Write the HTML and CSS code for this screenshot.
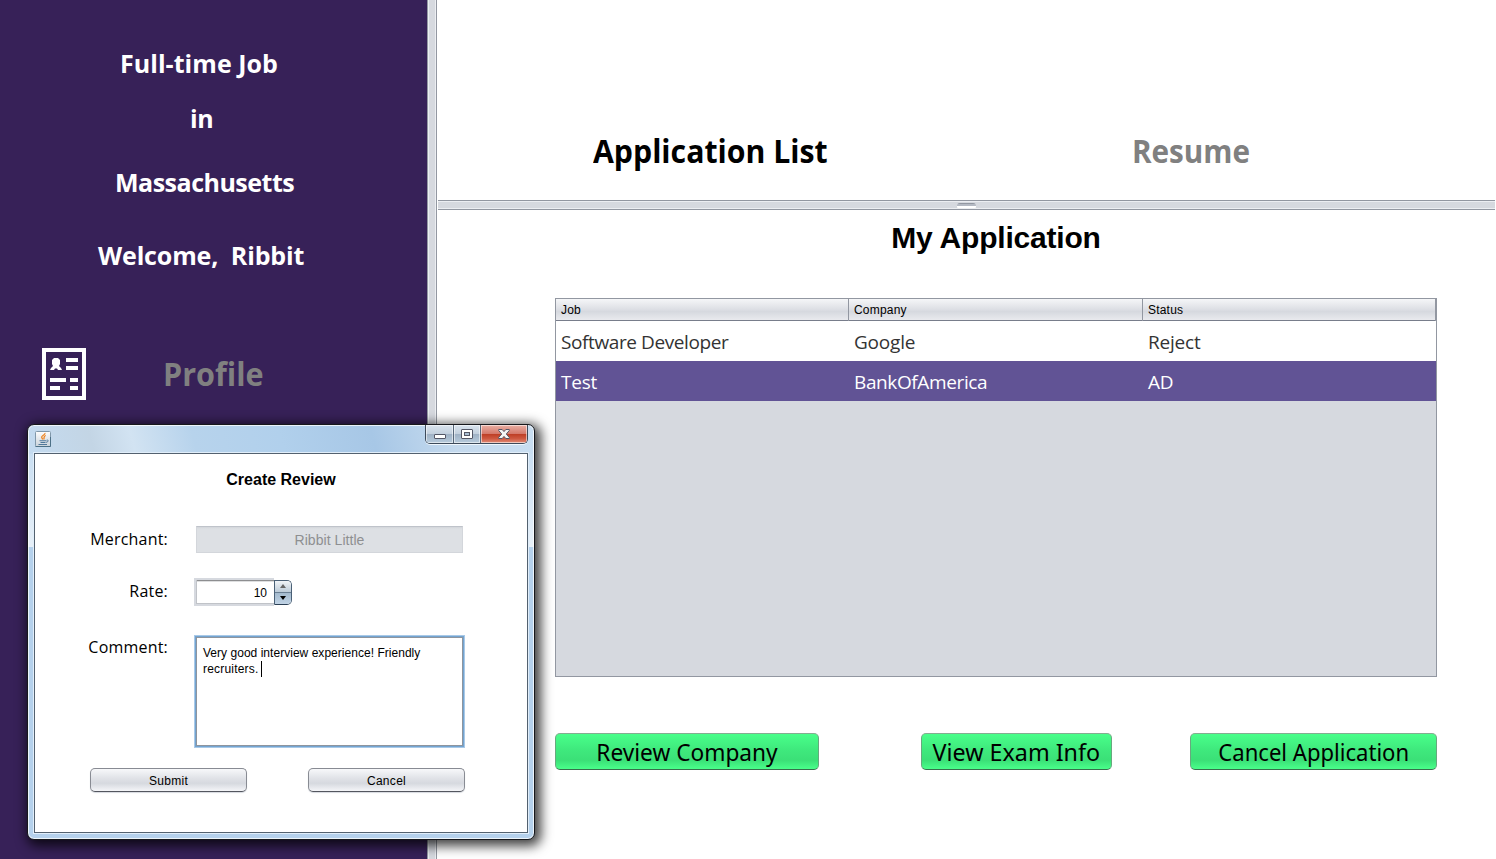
FILE: index.html
```html
<!DOCTYPE html>
<html lang="en">
<head>
<meta charset="utf-8">
<title>My Application</title>
<link rel="stylesheet" href="styles.css">
</head>
<body>
<div class="app">
  <aside class="sidebar">
    <div class="side-label type"><span>Full-time Job</span></div>
    <div class="side-label word-in"><span>in</span></div>
    <div class="side-label state"><span>Massachusetts</span></div>
    <div class="side-label welcome"><span>Welcome,&nbsp; Ribbit</span></div>
    <div class="profile">
      <svg class="profile-icon" width="44" height="52" viewBox="0 0 44 52" shape-rendering="crispEdges">
        <rect x="2" y="2" width="40" height="48" fill="none" stroke="#fff" stroke-width="4"/>
        <path fill="#fff" d="M24 10h12v4H24zM24 18h12v4H24zM8 30h16v4H8zM28 30h8v4h-8zM8 38h10v4H8zM28 38h8v4h-8z"/>
        <path fill="#fff" shape-rendering="auto" d="M12 10h4l2 2v4l-1 2 2 2 1 2h-4l-1-1.500h-2L12 22H8l1-2 2-2-1-2v-4z"/>
      </svg>
      <span class="profile-text">Profile</span>
    </div>
  </aside>
  <div class="divider-v"></div>
  <div class="content">
    <header class="tabs">
      <div class="tab tab-active"><span>Application List</span></div>
      <div class="tab tab-resume"><span>Resume</span></div>
    </header>
    <div class="divider-h"><i class="grip"></i></div>
    <main class="main">
      <h1 class="heading">My Application</h1>
      <div class="table">
        <div class="tr thead"><span>Job</span><span>Company</span><span>Status</span></div>
        <div class="tr"><span class="job">Software Developer</span><span>Google</span><span>Reject</span></div>
        <div class="tr selected"><span>Test</span><span class="bank">BankOfAmerica</span><span>AD</span></div>
      </div>
      <div class="actions">
        <button class="green review"><span>Review Company</span></button>
        <button class="green exam"><span>View Exam Info</span></button>
        <button class="green cancel-app"><span>Cancel Application</span></button>
      </div>
    </main>
  </div>
</div>

<section class="dialog">
  <div class="titlebar">
    <svg class="java" width="16" height="16" viewBox="0 0 16 16">
      <defs><linearGradient id="jg" x1="0" y1="0" x2="0" y2="1"><stop offset="0" stop-color="#fdfdfd"/><stop offset="1" stop-color="#c9d2da"/></linearGradient></defs>
      <rect x=".5" y=".5" width="15" height="15" rx="1" fill="url(#jg)" stroke="#8198aa"/>
      <path d="M.5 15.500h15V6" fill="none" stroke="#4d7187"/>
      <path d="M10 2C10.500 4 6 4.500 6.700 6.500c.3.800 1 1 .7 2M10.800 4.500C8 5.500 9.700 6.500 8.700 8.500" fill="none" stroke="#ee8420" stroke-width="1.300"/>
      <path d="M4.500 9.800h6.500M5.500 11.500h5M3.500 13.500h8.500" fill="none" stroke="#50789a" stroke-width="1.100"/>
      <path d="M11.500 9.300c2.600-.8 2.200 1.700-.5 2" fill="none" stroke="#50789a"/>
    </svg>
    <div class="controls">
      <span class="ctl min"><svg width="12" height="5" viewBox="0 0 12 5"><rect x=".5" y=".5" width="11" height="4" rx=".5" fill="#fff" stroke="#545766"/></svg></span>
      <span class="ctl max"><svg width="12" height="10" viewBox="0 0 12 10"><rect x=".5" y=".5" width="11" height="9" rx=".5" fill="#fff" stroke="#545766"/><rect x="3.500" y="3.500" width="5" height="3" fill="#a9bfd3" stroke="#545766"/></svg></span>
      <span class="ctl close"><svg width="12" height="10" viewBox="0 0 12 10"><path d="M.7.500h3.500L6 2.600 7.800.500h3.500v1L8.300 5l3 3.500v1H7.800L6 7.400 4.200 9.500H.7v-1L3.700 5l-3-3.500z" fill="#f5f5f5" stroke="#545766"/></svg></span>
    </div>
  </div>
  <div class="client">
    <h2 class="dialog-title">Create Review</h2>
    <div class="row row-merchant"><label>Merchant:</label><div class="merchant">Ribbit Little</div></div>
    <div class="row row-rate"><label>Rate:</label>
      <div class="spinner"><div class="spin-field">10</div>
        <div class="spin-buttons"><span><svg width="6" height="4" viewBox="0 0 6 4"><path d="M3 0l3 4H0z" fill="#666"/></svg></span><span><svg width="6" height="4" viewBox="0 0 6 4"><path d="M3 4l3-4H0z" fill="#000"/></svg></span></div>
      </div>
    </div>
    <div class="row row-comment"><label>Comment:</label><div class="comment"><span>Very good interview experience! Friendly</span><br><span class="line2">recruiters.</span><i class="caret"></i></div></div>
    <div class="buttons"><button class="grey">Submit</button><button class="grey">Cancel</button></div>
  </div>
</section>
</body>
</html>
```
FILE: styles.css
```css
* { box-sizing: border-box; }
body {
  margin: 0;
  background: #fff;
  color: #000;
  font-family: "Liberation Sans", sans-serif;
  overflow: hidden;
}
button { font-family: inherit; padding: 0; color: #000; }

.app { display: flex; width: 1496px; height: 859px; }

/* Sidebar */
.sidebar {
  width: 427px;
  padding-top: 43px;
  background: #372158;
  color: #fff;
  font: bold 25px/40px "Open Sans", sans-serif;
  white-space: nowrap;
}
.side-label { height: 40px; }
.type { padding-left: 120px; letter-spacing: .05px; }
.word-in { padding-left: 190px; margin-top: 15px; letter-spacing: -.5px; }
.state { padding-left: 115px; margin-top: 24px; letter-spacing: -.5px; }
.welcome { padding-left: 98px; margin-top: 33px; letter-spacing: -.15px; }
.profile { display: flex; align-items: center; padding-left: 42px; margin-top: 73px; height: 52px; }
.profile-text { margin-left: 77px; font-size: 32px; transform: scaleX(.955); transform-origin: left; color: #808080; }

/* Split pane dividers */
.divider-v {
  width: 10px;
  background: linear-gradient(to right, #9297a1 0 1px, #eceef2 1px 2px, #d6d9df 2px 8px, #eceef2 8px 9px, #9297a1 9px);
}
.divider-h {
  display: flex;
  justify-content: center;
  height: 10px;
  margin: 0 1px;
  padding-top: 3px;
  background: linear-gradient(#9297a1 0 1px, #eceef2 1px 2px, #d6d9df 2px 8px, #eceef2 8px 9px, #9297a1 9px);
}
.grip {
  width: 19px;
  height: 5px;
  border-radius: 3px 3px 1px 1px;
  background: linear-gradient(#9297a1 0 1px, #b4b9c3 1px 3px, #fff 3px);
}

/* Content */
.content { flex: 1; }
.tabs { display: flex; height: 200px; padding-top: 127px; font: bold 32px/48px "Open Sans", sans-serif; white-space: nowrap; }
.tab span { display: inline-block; transform-origin: left; }
.tab-active { width: 539px; padding-left: 156px; }
.tab-active span { transform: scaleX(.945); }
.tab-resume { padding-left: 156px; color: #808080; }
.tab-resume span { transform: scaleX(.927); }
.main { padding: 0 59px 0 118px; }
.heading { margin: 8px 0 0; font-size: 30px; line-height: 40px; letter-spacing: -.2px; text-align: center; }

.table { height: 379px; margin-top: 40px; border: 1px solid #9297a1; background: #d6d9df; }
.tr {
  display: grid;
  grid-template-columns: 293px 294px 1fr;
  height: 40px;
  background: #fff;
  color: #333;
  font: 19px/42px "Open Sans", sans-serif;
  letter-spacing: -.2px;
  white-space: nowrap;
}
.tr > span { padding-left: 5px; }
.job { letter-spacing: -.4px; }
.bank { letter-spacing: -.38px; }
.thead {
  height: 22px;
  border-bottom: 1px solid #787d8b;
  background: linear-gradient(#f5f6f8, #dfe1e6 45%, #d6d9df 60%, #e9eaee);
  color: #000;
  font: 12px/22px "Liberation Sans", sans-serif;
  letter-spacing: .2px;
}
.thead > span { border-right: 1px solid #9297a1; }
.selected { background: #615395; color: #fff; }

.actions { display: flex; justify-content: space-between; margin-top: 56px; }
.green {
  display: flex;
  justify-content: center;
  height: 37px;
  border: 1px solid #68a87e;
  border-top-color: #84ad91;
  border-bottom-color: #386e4c;
  border-radius: 5px;
  background: linear-gradient(#49ff8a, #3fe97d 45%, #3be077 75%, #49ff8a);
  font: 24px/36px "Noto Sans", sans-serif;
  white-space: nowrap;
}
.review { width: 264px; }
.review span { transform: scaleX(.945); }
.exam { width: 191px; margin-left: 24px; }
.exam span { transform: scaleX(.97); }
.cancel-app { width: 247px; }
.cancel-app span { transform: scaleX(.92); }

/* Dialog window over the page */
.dialog {
  position: absolute;
  left: 27px;
  top: 424px;
  width: 508px;
  height: 416px;
  padding: 0 6px;
  border: 1px solid #17181c;
  border-radius: 7px;
  background:
    linear-gradient(75deg, #c4dbf0, #c3d5e5 13%, #d2e3f2 21%, #b7d3ec 33%, #b1d0ec 50%, #a7c7e6 68%, #c5daee 84%, #c9def1) 0 0 / 100% 29px no-repeat,
    linear-gradient(#cadff2, #e7f0f8) 0 29px / 100% 93px no-repeat,
    #b5d1ec;
  box-shadow: inset 0 0 0 1px rgba(255, 255, 255, .75), 3px 3px 12px 3px rgba(0, 0, 0, .75);
}
.titlebar { display: flex; justify-content: space-between; height: 28px; padding-left: 1px; }
.java { margin-top: 6px; }
.controls { display: flex; width: 103px; height: 19px; border: 1px solid #3d4a5a; border-top: 0; border-radius: 0 0 5px 5px; overflow: hidden; box-shadow: 0 1px 0 #f0f7fd; }
.ctl { display: flex; justify-content: center; align-items: center; border-right: 1px solid #576779; box-shadow: inset 0 0 0 1px rgba(255, 255, 255, .55); background: linear-gradient(#dae4ee, #c3d0dd 48%, #9fb1c4 50%, #b7cbdc); }
.min { width: 28px; padding-top: 4px; }
.max { width: 27px; }
.close { flex: 1; border-right: 0; background: linear-gradient(#e9b0a5, #d5796b 48%, #bd3d24 50%, #ce5840 75%, #e28d78); }
.client {
  height: 380px;
  border: 1px solid #53616f;
  box-shadow: 0 0 0 1px #e1eefa;
  background: #fff;
}
.dialog-title { margin: 16px 0 0; font-size: 16px; line-height: 20px; text-align: center; }
.row { display: flex; }
.row label { width: 133px; padding-top: 1px; text-align: right; font: 16px/24px "Open Sans", sans-serif; letter-spacing: .2px; white-space: nowrap; }
.row-merchant { margin-top: 36px; height: 27px; }
.merchant {
  width: 267px;
  margin-left: 28px;
  border: 1px solid #d3d6db;
  border-top-color: #bfc3ca;
  background: linear-gradient(#d2d5da, #dde0e4 2px);
  color: #8e8f91;
  font-size: 14px;
  line-height: 26px;
  letter-spacing: .05px;
  text-align: center;
}
.row-rate { margin-top: 25px; height: 28px; }
.spinner { display: flex; align-items: center; margin-left: 26px; }
.spin-field {
  width: 80px;
  height: 28px;
  padding-right: 7px;
  border: 2px solid #d6d9df;
  border-right: 0;
  background: linear-gradient(#8d8e90 0 1px, #dedfe0 1px 2px, #fff 2px);
  box-shadow: inset 1px -1px 0 #c0c3c8;
  font-size: 12px;
  line-height: 26px;
  text-align: right;
}
.spin-buttons { width: 18px; height: 25px; display: flex; flex-direction: column; border: 1px solid #4a6076; border-bottom-color: #2c4055; border-radius: 0 5px 5px 0; overflow: hidden; }
.spin-buttons span { flex: 1; display: flex; align-items: center; justify-content: center; background: linear-gradient(#f1f4f7, #bccbd8); }
.spin-buttons span + span { border-top: 1px solid #6a7f93; background: linear-gradient(#a4bace, #c0d3e5); }
.row-comment { margin-top: 28px; height: 113px; }
.comment {
  width: 269px;
  height: 111px;
  margin: 2px 0 0 27px;
  padding: 8px 7px;
  border: 1px solid #73a4d1;
  box-shadow: inset 0 0 0 1px #8e959e, 0 0 0 1px #a9c9e7;
  font-size: 12px;
  line-height: 16px;
  letter-spacing: .03px;
  white-space: nowrap;
}
.line2 { letter-spacing: .2px; }
.caret { display: inline-block; width: 1px; height: 16px; margin-left: 2px; background: #000; vertical-align: top; }
.buttons { display: flex; gap: 61px; margin: 21px 0 0 55px; }
.grey {
  width: 157px;
  height: 24px;
  border: 1px solid #888b93;
  border-bottom-color: #53565f;
  border-radius: 5px;
  background: linear-gradient(#f7f8fa, #dfe1e6 45%, #d6d9df 65%, #f4f5f8);
  box-shadow: 0 1px 1px #d6d9df;
  font-size: 12px;
  line-height: 24px;
  letter-spacing: .3px;
}
```
